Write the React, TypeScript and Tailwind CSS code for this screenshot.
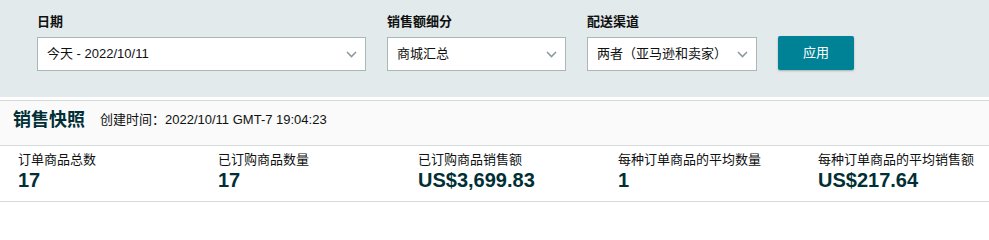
import React from "react";

const font = "font-['Liberation_Sans','Noto_Sans_CJK_SC',sans-serif]";

function Chevron() {
  return (
    <svg width="11" height="7" viewBox="0 0 11 7" className="shrink-0">
      <polyline points="1,1 5.5,5.5 10,1" fill="none" stroke="#8c9a9e" strokeWidth="1.6" />
    </svg>
  );
}

function Field({ label, value, width }: { label: string; value: string; width: string }) {
  return (
    <div className="flex flex-col">
      <div className="text-[13px] leading-[19px] font-bold text-[#0f1111] mb-[6px]">{label}</div>
      <div className={`${width} h-[34px] bg-white border border-[#aab7b8] flex items-center justify-between pl-[9px] pr-[8px]`}>
        <span className="text-[13px] text-[#0f1111] whitespace-nowrap">{value}</span>
        <Chevron />
      </div>
    </div>
  );
}

const metrics = [
  { label: "订单商品总数", value: "17" },
  { label: "已订购商品数量", value: "17" },
  { label: "已订购商品销售额", value: "US$3,699.83" },
  { label: "每种订单商品的平均数量", value: "1" },
  { label: "每种订单商品的平均销售额", value: "US$217.64" },
];

export default function App() {
  return (
    <div className={`w-[989px] h-[204px] bg-white overflow-hidden ${font}`}>
      <div className="h-[97px] bg-[#e3eaeb] pl-[37px] pt-[12px] flex gap-[21px]">
        <Field label="日期" value="今天 - 2022/10/11" width="w-[329px]" />
        <Field label="销售额细分" value="商城汇总" width="w-[179px]" />
        <Field label="配送渠道" value="两者（亚马逊和卖家）" width="w-[170px]" />
        <div className="flex flex-col justify-end pb-[27px]">
          <button className="w-[76px] h-[34px] bg-[#008296] rounded-[2px] shadow-[0_1px_2px_rgba(0,0,0,0.25)] text-white text-[13px]">
            应用
          </button>
        </div>
      </div>
      <div className="mt-[3px] border-t border-b border-[#d5dbdb]">
        <div className="h-[45px] bg-[#fafafa] border-b border-[#d5dbdb] flex items-center pl-[13px] pb-[6px] gap-[15px]">
          <span className="text-[18px] font-bold text-[#002f36]">销售快照</span>
          <span className="text-[13px] text-[#0f1111]">创建时间：2022/10/11 GMT-7 19:04:23</span>
        </div>
        <div className="h-[55px] pl-[18px] pt-[5px] grid grid-cols-[repeat(5,200px)]">
          {metrics.map((m) => (
            <div key={m.label} className="flex flex-col">
              <span className="text-[13px] leading-[18px] text-[#0f1111] whitespace-nowrap">{m.label}</span>
              <span className="text-[20px] leading-[23px] font-bold text-[#002f36]">{m.value}</span>
            </div>
          ))}
        </div>
      </div>
    </div>
  );
}
